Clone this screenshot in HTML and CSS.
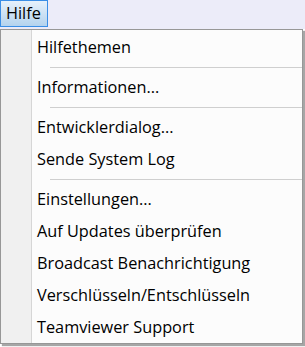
FILE: index.html
```html
<!DOCTYPE html>
<html lang="de">
<head>
    <meta charset="UTF-8">
    <title>Hilfe</title>
    <link rel="stylesheet" href="styles.css">
</head>
<body>
    <div class="menubar">
        <span class="menubar-item active">Hilfe</span>
    </div>
    <div class="dropdown">
        <div class="gutter"></div>
        <ul class="items">
            <li class="item">Hilfethemen</li>
            <li class="sep"></li>
            <li class="item">Informationen...</li>
            <li class="sep"></li>
            <li class="item">Entwicklerdialog...</li>
            <li class="item">Sende System Log</li>
            <li class="sep"></li>
            <li class="item">Einstellungen...</li>
            <li class="item">Auf Updates überprüfen</li>
            <li class="item">Broadcast Benachrichtigung</li>
            <li class="item">Verschlüsseln/Entschlüsseln</li>
            <li class="item">Teamviewer Support</li>
        </ul>
    </div>
</body>
</html>
```

FILE: styles.css
```css
html, body {
    margin: 0;
    height: 100%;
    background: #ffffff;
    font-family: 'Open Sans', 'Noto Sans', Arial, sans-serif;
    font-size: 16.3px;
    color: #000;
    overflow: hidden;
}

.menubar {
    height: 29px;
    background-color: #ececf9;
    display: flex;
}

.menubar-item {
    display: flex;
    align-items: center;
    padding: 0 6px 1px 5px;
    height: 27px;
    box-sizing: border-box;
}

.menubar-item.active {
    border: 1px solid #3a8ee6;
    background: linear-gradient(#e6f1fb, #b4d3ee);
}

.dropdown {
    position: relative;
    width: 303px;
    height: 315px;
    box-sizing: border-box;
    border: 1px solid #979797;
    background-color: #fcfcfc;
    display: flex;
    box-shadow: 2px 2px 1px rgba(0, 0, 0, 0.35);
}

.gutter {
    width: 30px;
    background-color: #f0f0f0;
    border-right: 1px solid #d6d6d6;
}

.items {
    list-style: none;
    margin: 0;
    padding: 1px 0 0 0;
    flex: 1;
}

.item {
    height: 32px;
    line-height: 32px;
    padding-left: 5px;
    white-space: nowrap;
}

.sep {
    height: 8px;
    display: flex;
    align-items: center;
    padding-left: 18px;
}

.sep::before {
    content: "";
    flex: 1;
    height: 1px;
    background-color: #cfcfcf;
}
```
